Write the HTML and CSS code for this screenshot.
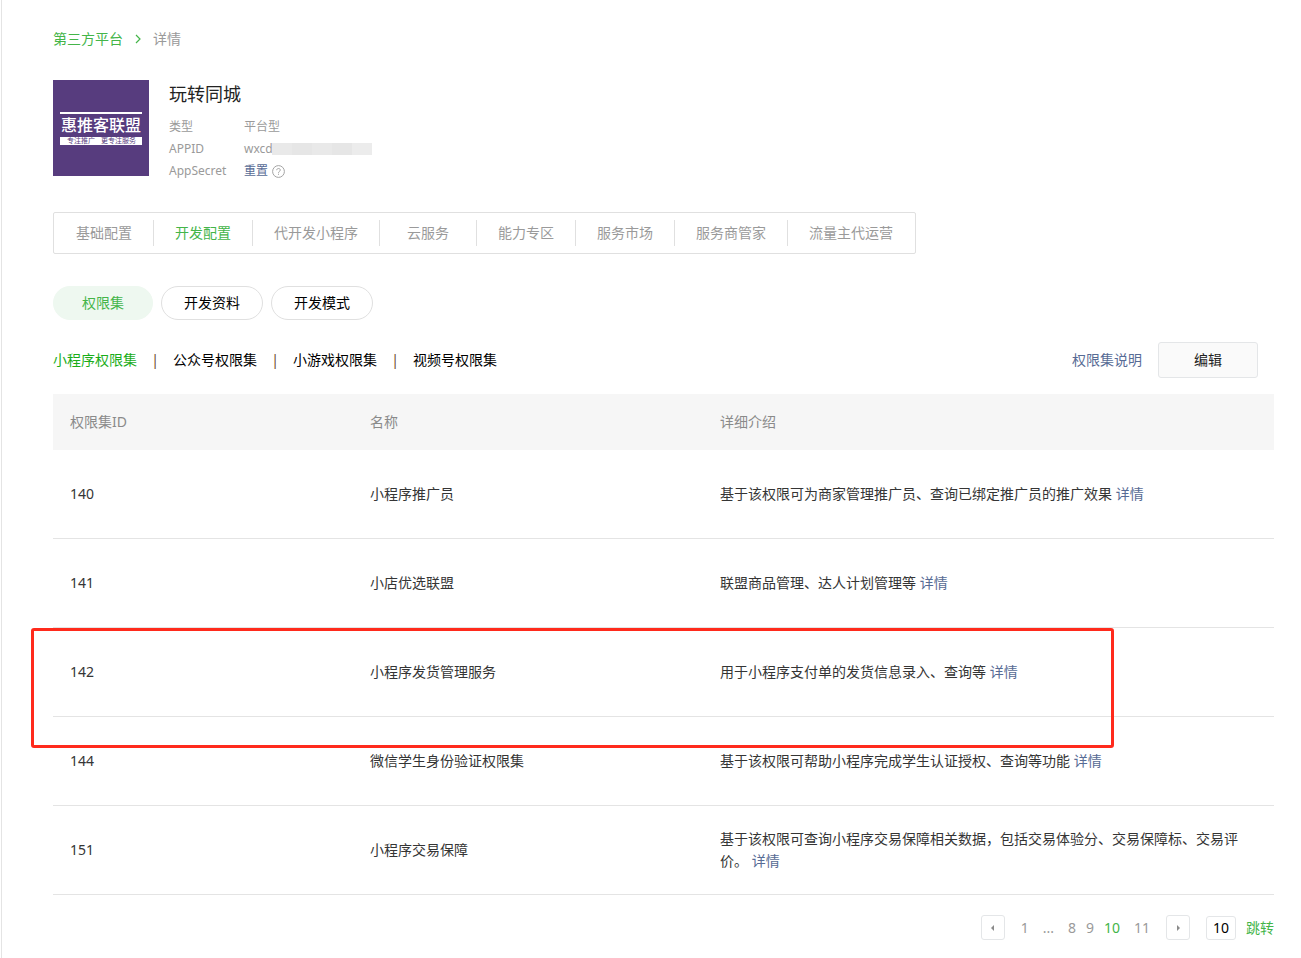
FILE: index.html
```html
<!DOCTYPE html>
<html lang="zh-CN">
<head>
<meta charset="utf-8">
<meta name="viewport" content="width=device-width, initial-scale=1">
<title>第三方平台 - 详情</title>
<link rel="stylesheet" href="styles.css">
</head>
<body>
<main class="page">
  <nav class="breadcrumb" aria-label="位置">
    <a class="green" href="#">第三方平台</a>
    <svg class="chevron" width="6" height="10" viewBox="0 0 6 10" aria-hidden="true"><path d="M1 1l4 4-4 4" fill="none" stroke="#44b549" stroke-width="1.2"/></svg>
    <span>详情</span>
  </nav>

  <section class="profile">
    <svg class="logo" width="96" height="96" viewBox="0 0 96 96" role="img" aria-label="惠推客联盟">
      <rect width="96" height="96" fill="#573c7e"/>
      <rect x="7" y="32" width="82" height="2" fill="#fff"/>
      <text class="logo-name" x="48" y="51" text-anchor="middle">惠推客联盟</text>
      <rect x="7" y="57" width="82" height="8" fill="#fff"/>
      <text class="logo-slogan" x="14" y="63">专注推广</text>
      <text class="logo-slogan" x="48" y="63">更专注服务</text>
    </svg>
    <div class="profile-info">
      <h1 class="profile-name">玩转同城</h1>
      <dl class="facts">
        <dt>类型</dt><dd>平台型</dd>
        <dt>APPID</dt><dd>wxcd<span class="mosaic"><i></i><i></i><i></i><i></i><i></i></span></dd>
        <dt>AppSecret</dt>
        <dd><a class="link" href="#">重置</a>
          <svg class="help" width="13" height="13" viewBox="0 0 13 13" aria-hidden="true"><circle cx="6.5" cy="6.5" r="5.9" fill="none" stroke="#a3a3a3"/><path d="M4.7 5.2c0-2.3 3.7-2.2 3.6-.1 0 1.3-1.8 1.3-1.8 2.7M6.5 8.7v1.1" fill="none" stroke="#a3a3a3"/></svg>
        </dd>
      </dl>
    </div>
  </section>

  <nav class="tabs" aria-label="配置">
    <a href="#">基础配置</a><a class="active" href="#">开发配置</a><a href="#">代开发小程序</a><a href="#">云服务</a><a href="#">能力专区</a><a href="#">服务市场</a><a href="#">服务商管家</a><a href="#">流量主代运营</a>
  </nav>

  <div class="pills">
    <button class="pill active" type="button">权限集</button>
    <button class="pill" type="button">开发资料</button>
    <button class="pill" type="button">开发模式</button>
  </div>

  <div class="toolbar">
    <nav class="subnav" aria-label="权限集类型">
      <a class="active" href="#">小程序权限集</a><span class="bar">|</span>
      <a href="#">公众号权限集</a><span class="bar">|</span>
      <a href="#">小游戏权限集</a><span class="bar">|</span>
      <a href="#">视频号权限集</a>
    </nav>
    <a class="link" href="#">权限集说明</a>
    <button class="edit" type="button">编辑</button>
  </div>

  <div class="table-wrap">
    <table class="table">
      <colgroup><col class="col-id"><col class="col-name"><col></colgroup>
      <thead>
        <tr><th>权限集ID</th><th>名称</th><th>详细介绍</th></tr>
      </thead>
      <tbody>
        <tr><td>140</td><td>小程序推广员</td><td>基于该权限可为商家管理推广员、查询已绑定推广员的推广效果 <a class="link" href="#">详情</a></td></tr>
        <tr><td>141</td><td>小店优选联盟</td><td>联盟商品管理、达人计划管理等 <a class="link" href="#">详情</a></td></tr>
        <tr><td>142</td><td>小程序发货管理服务</td><td>用于小程序支付单的发货信息录入、查询等 <a class="link" href="#">详情</a></td></tr>
        <tr><td>144</td><td>微信学生身份验证权限集</td><td>基于该权限可帮助小程序完成学生认证授权、查询等功能 <a class="link" href="#">详情</a></td></tr>
        <tr><td>151</td><td>小程序交易保障</td><td>基于该权限可查询小程序交易保障相关数据，包括交易体验分、交易保障标、交易评价。 <a class="link" href="#">详情</a></td></tr>
      </tbody>
    </table>
    <div class="highlight"></div>
  </div>

  <nav class="pagination" aria-label="分页">
    <button class="step" type="button" aria-label="上一页"><svg width="3" height="6" viewBox="0 0 3 6"><path d="M3 0v6L0 3z" fill="#8a8a8a"/></svg></button>
    <div class="numbers">
      <a href="#">1</a><span>...</span>
      <div class="near"><a href="#">8</a><a href="#">9</a><a class="green" href="#">10</a></div>
      <a href="#">11</a>
    </div>
    <button class="step" type="button" aria-label="下一页"><svg width="3" height="6" viewBox="0 0 3 6"><path d="M0 0v6l3-3z" fill="#8a8a8a"/></svg></button>
    <div class="jump">
      <input class="jump-input" type="text" value="10" aria-label="页码">
      <a class="green" href="#">跳转</a>
    </div>
  </nav>
</main>
</body>
</html>
```
FILE: styles.css
```css
* { box-sizing: border-box; }

body {
  margin: 0;
  padding-left: 1px;
  background: #fff;
  color: #353535;
  font: 14px/22px "Noto Sans", "Noto Sans CJK SC", sans-serif;
}

a { color: inherit; text-decoration: none; }
button, input { font: inherit; }
button { cursor: pointer; }
svg { display: block; flex: none; }

.page {
  min-height: 100vh;
  padding: 28px 27px 16px 51px;
  border-left: 1px solid #e4e4e4;
}

.green { color: #44b549; }
.link { color: #576b95; }

.breadcrumb {
  display: flex;
  align-items: center;
  gap: 12px;
  color: #9a9a9a;
}

.profile {
  display: flex;
  gap: 20px;
  margin-top: 30px;
}

.logo-name {
  font: 500 16px "Noto Sans CJK SC", sans-serif;
  fill: #fff;
}

.logo-slogan {
  font: 7px "Noto Sans CJK SC", sans-serif;
  fill: #573c7e;
}

.profile-name {
  margin: 1px 0 9px;
  color: #222;
  font-size: 18px;
  font-weight: 400;
  line-height: 26px;
}

.facts {
  display: grid;
  grid-template-columns: 75px auto;
  margin: 0;
  color: #9a9a9a;
  font-size: 12px;
}

.facts dd {
  display: flex;
  align-items: center;
  margin: 0;
}

.help { margin-left: 4px; }

.mosaic {
  display: flex;
  height: 12px;
  margin-left: -1px;
}

.mosaic i { width: 20px; background: #e9e9e9; }
.mosaic i:nth-child(2n) { background: #e6e6e6; }
.mosaic i:nth-child(5) { background: #ececec; }

.tabs {
  display: flex;
  width: fit-content;
  margin-top: 30px;
  padding: 7px 1px;
  border: 1px solid #e0e0e0;
  border-radius: 2px;
  color: #9a9a9a;
}

.tabs a {
  min-width: 97px;
  padding: 0 21px;
  border-right: 1px solid #e0e0e0;
  line-height: 26px;
  text-align: center;
}

.tabs a:last-child { border-right: 0; }
.tabs .active { color: #44b549; }

.pills {
  display: flex;
  gap: 8px;
  margin-top: 32px;
}

.pill {
  min-width: 100px;
  height: 34px;
  padding: 0 22px;
  border: 1px solid #e0e0e0;
  border-radius: 17px;
  background: #fff;
  color: #000;
}

.pill.active {
  border-color: #eef8f0;
  background: #eef8f0;
  color: #44b549;
}

.toolbar {
  display: flex;
  align-items: center;
  gap: 16px;
  margin: 22px 16px 16px 0;
}

.subnav {
  display: flex;
  gap: 14px;
  margin-right: auto;
  color: #000;
}

.subnav .active { color: #1aad19; }

.bar {
  width: 8px;
  color: #6b4a2a;
  text-align: center;
}

.edit {
  width: 100px;
  height: 36px;
  border: 1px solid #e4e6e8;
  border-radius: 3px;
  background: #fafafa;
  color: #222;
}

.table-wrap { position: relative; }

.table {
  width: 100%;
  border-spacing: 0;
  table-layout: fixed;
}

.col-id { width: 300px; }
.col-name { width: 350px; }

.table th,
.table td {
  padding: 0 24px 0 17px;
  text-align: left;
  vertical-align: middle;
}

.table th {
  height: 56px;
  background: #f6f6f6;
  color: #8a8a8a;
  font-weight: 400;
}

.table td {
  height: 89px;
  border-bottom: 1px solid #e4e4e4;
}

/* Annotation frame over the 142 row */
.highlight {
  position: absolute;
  top: 234px;
  right: 160px;
  left: -22px;
  height: 120px;
  border: 3px solid #ff2a1c;
  border-radius: 3px;
  pointer-events: none;
}

.pagination {
  display: flex;
  align-items: center;
  justify-content: flex-end;
  gap: 16px;
  margin-top: 20px;
  color: #9a9a9a;
}

.step {
  display: flex;
  align-items: center;
  justify-content: center;
  width: 24px;
  height: 25px;
  padding: 0;
  border: 1px solid #e4e6e8;
  border-radius: 3px;
  background: #fff;
}

.numbers { display: flex; gap: 14px; }
.near { display: flex; gap: 10px; }
.jump { display: flex; align-items: center; gap: 10px; }

.jump-input {
  width: 30px;
  height: 24px;
  padding: 0;
  border: 1px solid #e4e6e8;
  border-radius: 3px;
  color: #000;
  text-align: center;
}
```
